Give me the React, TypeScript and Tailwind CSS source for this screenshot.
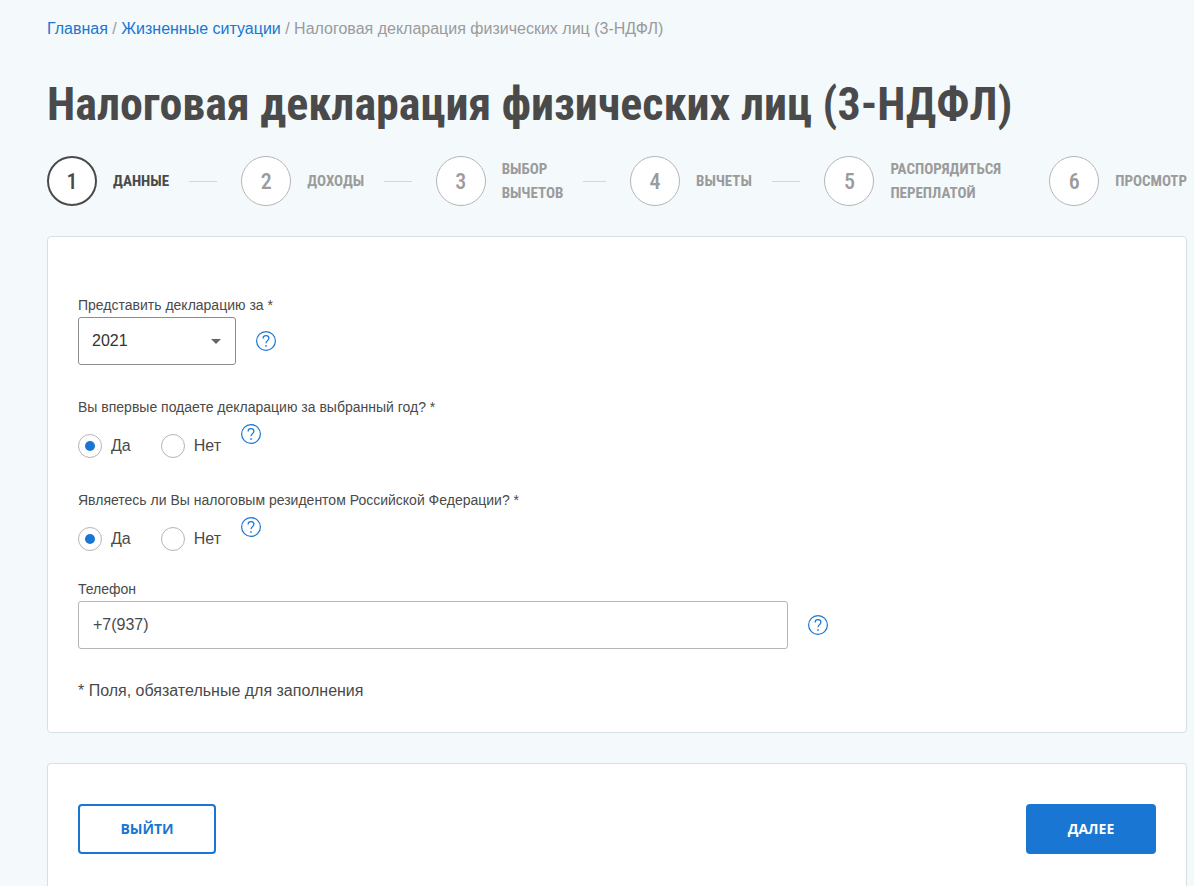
import { useState } from "react";
import clsx from "clsx";

const steps = [
  { label: "Данные" },
  { label: "Доходы" },
  { label: "Выбор вычетов" },
  { label: "Вычеты" },
  { label: "Распорядиться переплатой" },
  { label: "Просмотр" },
];

const display = "font-['Roboto_Condensed','Open_Sans_Condensed',sans-serif]";

function HelpButton({ label }: { label: string }) {
  return (
    <button type="button" aria-label={label} className="size-5 shrink-0 text-[#1976d2]">
      <svg viewBox="0 0 20 20" fill="none" stroke="currentColor" className="size-5">
        <circle cx="10" cy="10" r="9.4" strokeWidth="1.2" />
        <path d="M7.1 7.4C7.1 5.7 8.3 4.7 10 4.7s2.9 1 2.9 2.5c0 1.3-.7 1.9-1.5 2.5-.9.7-1.4 1.2-1.4 2.5" strokeWidth="1.2" />
        <path d="M10 14.2v1.6" strokeWidth="1.6" />
      </svg>
    </button>
  );
}

function Steps({ current }: { current: number }) {
  return (
    <ol className="mt-[22px] flex">
      {steps.map((step, i) => (
        <li
          key={step.label}
          aria-current={i === current ? "step" : undefined}
          className={clsx(
            "flex h-[50px] items-center",
            i < 4 && "flex-1",
            i === 4 && "pr-12",
            i === current ? "text-[#4a4a4a]" : "text-[#9b9b9b]",
          )}
        >
          <span
            className={clsx(
              "grid size-[50px] shrink-0 place-items-center rounded-full bg-white text-[22px] font-medium",
              display,
              i === current ? "border-2 border-[#4a4a4a]" : "border border-[#b5b5b5]",
            )}
          >
            {i + 1}
          </span>
          <span className={clsx("ml-4 text-[15px] leading-6 font-bold uppercase", display)}>
            {step.label.split(" ").map((word) => (
              <span key={word} className="block">{word}</span>
            ))}
          </span>
          {i < 4 && <span className="mr-6 ml-5 h-px flex-1 bg-[#d3d7d9]" />}
        </li>
      ))}
    </ol>
  );
}

type YesNoProps = {
  name: string;
  legend: string;
  value: string;
  onChange: (value: string) => void;
};

function YesNo({ name, legend, value, onChange }: YesNoProps) {
  return (
    <fieldset className="mt-[34px]">
      <legend className="text-sm leading-4">{legend}</legend>
      <div className="mt-[9px] flex h-[34px] items-end">
        {["Да", "Нет"].map((option) => (
          <label key={option} className="mr-[30px] flex items-center gap-[9px] leading-6 last-of-type:mr-5">
            <input
              type="radio"
              name={name}
              value={option}
              checked={value === option}
              onChange={() => onChange(option)}
              className="grid size-6 appearance-none place-items-center rounded-full border border-[#b5b5b5] bg-white before:size-[10px] before:rounded-full checked:before:bg-[#1976d2]"
            />
            {option}
          </label>
        ))}
        <div className="self-start">
          <HelpButton label={legend} />
        </div>
      </div>
    </fieldset>
  );
}

export default function App() {
  const [year, setYear] = useState("2021");
  const [first, setFirst] = useState("Да");
  const [resident, setResident] = useState("Да");
  const [phone, setPhone] = useState("+7(937)");

  return (
    <main className="flex min-h-screen flex-col bg-[#f4f9fc] pt-[17px] pr-[7px] pl-[47px] font-['Liberation_Sans',Arial,sans-serif] text-base text-[#4a4a4a]">
      <nav className="leading-6 text-[#9b9b9b]">
        <a href="#" className="text-[#1976d2]">Главная</a> /{" "}
        <a href="#" className="text-[#1976d2]">Жизненные ситуации</a> / Налоговая декларация физических лиц (3-НДФЛ)
      </nav>
      <h1 className={clsx("mt-[33px] text-[46px] leading-[60px] font-bold", display)}>
        Налоговая декларация физических лиц (3-НДФЛ)
      </h1>
      <Steps current={0} />

      <form className="mt-[30px] rounded-sm border border-[#d8dfe2] bg-white px-[30px] pt-[60px] pb-[29px]">
        <label htmlFor="year" className="block text-sm leading-4">Представить декларацию за *</label>
        <div className="mt-1 flex items-center gap-5">
          <div className="relative w-[158px]">
            <select
              id="year"
              value={year}
              onChange={(e) => setYear(e.target.value)}
              className="h-12 w-full appearance-none rounded-[3px] border border-[#8c8c8c] bg-white px-[13px] text-[#333]"
            >
              <option>2021</option>
              <option>2020</option>
              <option>2019</option>
            </select>
            <svg viewBox="0 0 10 5" className="pointer-events-none absolute top-[22px] right-[15px] h-[5px] w-[10px] fill-[#666]">
              <path d="M0 0h10L5 5z" />
            </svg>
          </div>
          <HelpButton label="Представить декларацию за" />
        </div>

        <YesNo name="first" legend="Вы впервые подаете декларацию за выбранный год? *" value={first} onChange={setFirst} />
        <YesNo name="resident" legend="Являетесь ли Вы налоговым резидентом Российской Федерации? *" value={resident} onChange={setResident} />

        <label htmlFor="phone" className="mt-[30px] block text-sm leading-4">Телефон</label>
        <div className="mt-1 flex items-center gap-5">
          <input
            id="phone"
            type="tel"
            value={phone}
            onChange={(e) => setPhone(e.target.value)}
            className="h-12 w-full max-w-[710px] rounded-[3px] border border-[#b5b5b5] bg-white px-[14px]"
          />
          <HelpButton label="Телефон" />
        </div>
        <p className="mt-[30px] leading-6">* Поля, обязательные для заполнения</p>
      </form>

      <div className="mt-[30px] flex flex-1 items-start justify-between rounded-t-sm border border-b-0 border-[#d8dfe2] bg-white px-[30px] pt-10 pb-8 font-['Open_Sans',sans-serif] text-sm font-bold">
        <button type="button" className="h-[50px] w-[138px] rounded-sm border-2 border-[#1976d2] text-[#1976d2] uppercase">
          Выйти
        </button>
        <button type="button" className="h-[50px] w-[130px] rounded-sm bg-[#1976d2] text-white uppercase">
          Далее
        </button>
      </div>
    </main>
  );
}
